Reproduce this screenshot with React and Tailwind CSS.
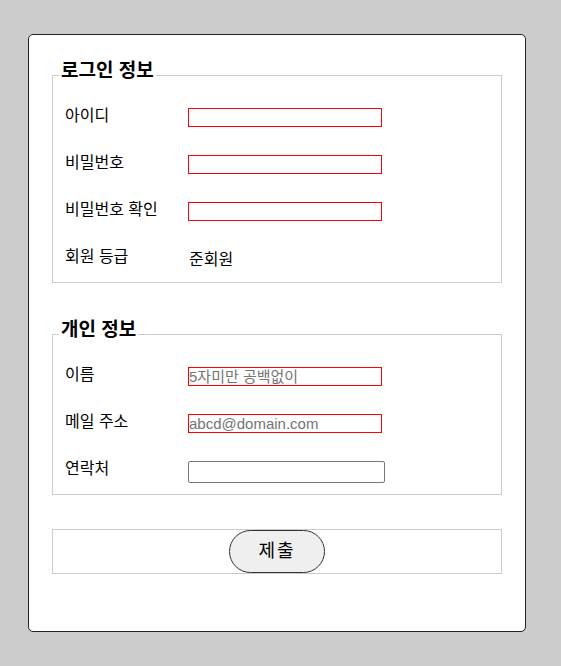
import React from "react";

const font = { fontFamily: '"Liberation Sans", "Noto Sans CJK KR", sans-serif' };

function Row({ label, children, h = "h-[47px]" }) {
  return (
    <div className={`flex items-start ${h}`}>
      <div className="w-[129px] pl-[6px] text-[16px] leading-[15px] text-black">{label}</div>
      <div>{children}</div>
    </div>
  );
}

function RedInput({ placeholder }) {
  return (
    <input
      placeholder={placeholder}
      className="block w-[194px] h-[19px] border border-[#ff0000] px-0 text-[15px] leading-[17px] outline-none placeholder:text-[#757575]"
      style={font}
    />
  );
}

export default function App() {
  return (
    <div className="min-h-[666px] bg-[#cccccc] pt-[34px] pl-[28px]" style={font}>
      <div className="w-[498px] h-[598px] bg-white border border-[#222222] rounded-[5px] px-[23px] pt-[25px]">
        <fieldset className="border border-[#cccccc] px-[6px] pb-[6px]">
          <legend className="px-[2px] text-[19px] font-bold leading-[22px] pb-[8px]">로그인 정보</legend>
          <div className="pt-[18px]">
            <Row label="아이디"><RedInput /></Row>
            <Row label="비밀번호"><RedInput /></Row>
            <Row label="비밀번호 확인"><RedInput /></Row>
            <Row label="회원 등급" h="h-[27px]">
              <div className="text-[16px] leading-[19px] pl-[1px] pt-[1px]">준회원</div>
            </Row>
          </div>
        </fieldset>

        <fieldset className="mt-[36px] border border-[#cccccc] px-[6px] pb-[4px]">
          <legend className="px-[2px] text-[19px] font-bold leading-[22px] pb-[8px]">개인 정보</legend>
          <div className="pt-[18px]">
            <Row label="이름"><RedInput placeholder="5자미만 공백없이" /></Row>
            <Row label="메일 주소"><RedInput placeholder="abcd@domain.com" /></Row>
            <Row label="연락처" h="h-[29px]">
              <input className="block w-[197px] h-[22px] border border-[#767676] rounded-[2px] outline-none" style={font} />
            </Row>
          </div>
        </fieldset>

        <div className="mt-[34px] border border-[#cccccc] flex justify-center h-[45px]">
          <button className="w-[96px] h-[43px] rounded-full border border-[#333333] bg-[#efefef] text-[18px] tracking-[2px] text-black">
            제출
          </button>
        </div>
      </div>
    </div>
  );
}
